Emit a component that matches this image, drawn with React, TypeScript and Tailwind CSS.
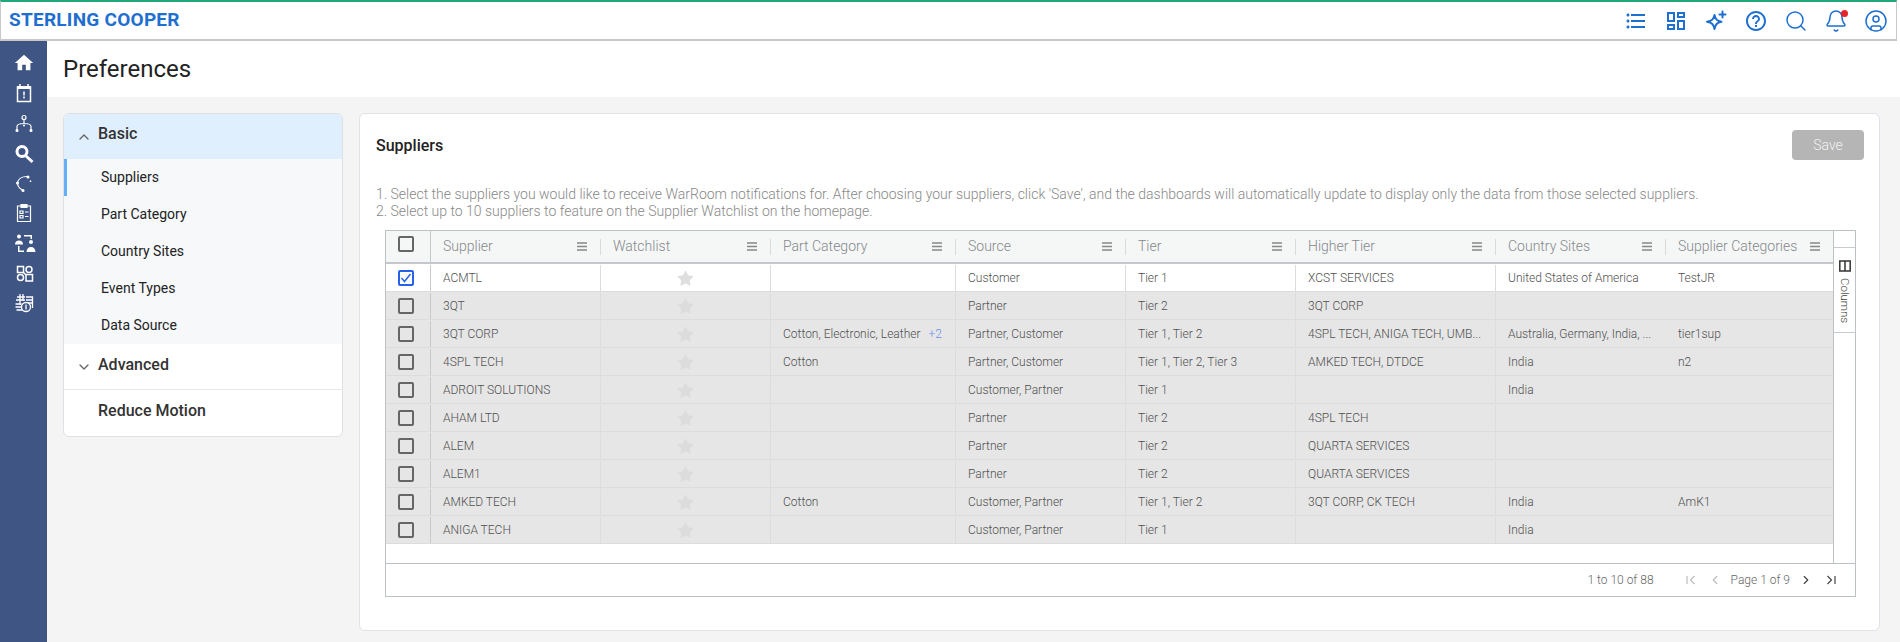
import { MdHome, MdFormatListBulleted, MdOutlineDashboard, MdOutlineHelpOutline } from 'react-icons/md';
import { ChevronUp, ChevronDown, ChevronLeft, ChevronRight, Search, Bell, CircleUser, Star } from 'lucide-react';

const cols = 'grid grid-cols-[45px_170px_170px_185px_170px_170px_200px_170px_168px]';

const rows = [
  ['ACMTL', '', 'Customer', 'Tier 1', 'XCST SERVICES', 'United States of America', 'TestJR'],
  ['3QT', '', 'Partner', 'Tier 2', '3QT CORP', '', ''],
  ['3QT CORP', 'Cotton, Electronic, Leather', 'Partner, Customer', 'Tier 1, Tier 2', '4SPL TECH, ANIGA TECH, UMB...', 'Australia, Germany, India, ...', 'tier1sup'],
  ['4SPL TECH', 'Cotton', 'Partner, Customer', 'Tier 1, Tier 2, Tier 3', 'AMKED TECH, DTDCE', 'India', 'n2'],
  ['ADROIT SOLUTIONS', '', 'Customer, Partner', 'Tier 1', '', 'India', ''],
  ['AHAM LTD', '', 'Partner', 'Tier 2', '4SPL TECH', '', ''],
  ['ALEM', '', 'Partner', 'Tier 2', 'QUARTA SERVICES', '', ''],
  ['ALEM1', '', 'Partner', 'Tier 2', 'QUARTA SERVICES', '', ''],
  ['AMKED TECH', 'Cotton', 'Customer, Partner', 'Tier 1, Tier 2', '3QT CORP, CK TECH', 'India', 'AmK1'],
  ['ANIGA TECH', '', 'Customer, Partner', 'Tier 1', '', 'India', ''],
];

const headers = ['Supplier', 'Watchlist', 'Part Category', 'Source', 'Tier', 'Higher Tier', 'Country Sites', 'Supplier Categories'];
const basicItems = ['Suppliers', 'Part Category', 'Country Sites', 'Event Types', 'Data Source'];

function Sparkle() {
  return (
    <svg width="24" height="24" viewBox="0 0 24 24" fill="none" stroke="#1f6fd0" strokeWidth="2" strokeLinejoin="round">
      <path d="M10.500 6c.9 4.300 2.400 5.800 7 6.800-4.600 1-6.100 2.500-7 7.200-.9-4.700-2.400-6.200-7.500-7.200 5.100-1 6.600-2.500 7.500-6.800z" />
      <path d="M18.500 2.500v6M15.500 5.500h6" strokeLinecap="round" />
    </svg>
  );
}

function HeaderMenu() {
  return (
    <svg width="10" height="9" viewBox="0 0 10 9" className="shrink-0" fill="none" stroke="#888888" strokeWidth="1.500">
      <path d="M0 1h10M0 4.500h10M0 8h10" />
    </svg>
  );
}

function SideIcons() {
  return (
    <>
      <div className="h-[30px] flex items-center justify-center"><MdHome size={22} /></div>
      <div className="h-[30px] flex items-center justify-center">
        <svg width="24" height="24" viewBox="0 0 24 24" fill="none" stroke="white" strokeWidth="1.500">
          <path d="M5.500 6h13v14.500h-13z" />
          <path d="M5 6.500h14" strokeWidth="3" />
          <path d="M8 3v3M16 3v3M12 10.500v4M12 15.500v2" />
        </svg>
      </div>
      <div className="h-[30px] flex items-center justify-center">
        <svg width="24" height="24" viewBox="0 0 24 24" fill="none" stroke="white" strokeWidth="1.200">
          <circle cx="12" cy="6.500" r="2" />
          <path d="M12 8.500v4M5 19v-3.500c0-2 3-3 7-3s7 1 7 3V19" />
          <circle cx="5" cy="19.500" r="1.500" fill="white" stroke="none" />
          <circle cx="19" cy="19.500" r="1.500" fill="white" stroke="none" />
          <circle cx="12" cy="14.500" r="1" fill="white" stroke="none" />
        </svg>
      </div>
      <div className="h-[30px] flex items-center justify-center">
        <svg width="24" height="24" viewBox="0 0 24 24" fill="none" stroke="white" strokeWidth="3">
          <circle cx="10" cy="10.500" r="5" />
          <path d="M14 15l6.500 6" />
        </svg>
      </div>
      <div className="h-[30px] flex items-center justify-center">
        <svg width="24" height="24" viewBox="0 0 24 24" fill="none" stroke="white" strokeWidth="1.200">
          <path d="M15 5.500c-5 0-9 2.500-9.500 6.500 0 3 2 5.500 5 7" />
          <path d="M18.500 9.500v1.500" strokeWidth="1.500" />
          <circle cx="16" cy="6" r="1.500" fill="white" stroke="none" />
          <circle cx="5.500" cy="12" r="1.500" fill="white" stroke="none" />
          <circle cx="11" cy="19.500" r="1.500" fill="white" stroke="none" />
        </svg>
      </div>
      <div className="h-[30px] flex items-center justify-center">
        <svg width="24" height="24" viewBox="0 0 24 24" fill="none" stroke="white" strokeWidth="1.200">
          <path d="M5.500 5h13v15.500h-13z" />
          <path d="M9 3.500h6v3H9z" fill="white" />
          <path d="M8 10h3v2.500H8zM8 14.500h3V17H8zM13 11h3.500M13 15.500h3.500" />
        </svg>
      </div>
      <div className="h-[30px] flex items-center justify-center">
        <svg width="24" height="24" viewBox="0 0 24 24" fill="white" stroke="none">
          <circle cx="7" cy="5.500" r="2" />
          <path d="M3 13.500c0-2.600 1.600-4 4-4s4 1.400 4 4z" />
          <circle cx="19" cy="11" r="2" />
          <path d="M14.500 21c0-3 1.800-5 4.500-5s4.500 2 4.500 5z" />
          <path d="M12 4h8v4h-1.500V5.500H12zM6 15h1.500v4.500H12V21H6z" />
        </svg>
      </div>
      <div className="h-[30px] flex items-center justify-center">
        <svg width="24" height="24" viewBox="0 0 24 24" fill="none" stroke="white" strokeWidth="1.500">
          <path d="M5.500 5.500h6v6h-6zM14 13.500h6.500v6.500H14z" />
          <circle cx="17" cy="8.500" r="3" />
          <circle cx="8.500" cy="16.500" r="3" />
          <path d="M11 11l3 3" />
        </svg>
      </div>
      <div className="h-[30px] flex items-center justify-center">
        <svg width="24" height="24" viewBox="0 0 24 24" fill="none" stroke="white" strokeWidth="1.300">
          <path d="M8 3v11M11 3v7M5 6h8M4 9h9M3.500 13h6M3.500 16h6M4.500 19h6" />
          <path d="M14 6h6.500v11M14 9h6.500M14 12h6.500" />
          <circle cx="14" cy="16" r="4.500" fill="#3f5685" />
          <path d="M14 13.500v5" />
        </svg>
      </div>
    </>
  );
}

function Checkbox({ checked }: { checked?: boolean }) {
  return (
    <div className={`w-4 h-4 rounded-[2px] border-2 flex items-center justify-center ${checked ? 'border-[#2661ea] bg-white' : 'border-[#666666]'}`}>
      {checked && (
        <svg width="12" height="12" viewBox="0 0 12 12" fill="none" stroke="#2661ea" strokeWidth="1.500">
          <path d="M1.500 6l3 3.500L10.500 2" />
        </svg>
      )}
    </div>
  );
}

export default function App() {
  return (
    <div className="w-[1900px] h-[642px] overflow-hidden flex flex-col bg-white font-['Roboto',sans-serif]">
      <header className="h-[41px] shrink-0 border-t-2 border-t-[#23a67c] border-b-2 border-b-[#c8c8c8] border-l border-l-[#c8c8c8] border-r border-r-[#c8c8c8] mr-[3px] flex items-center justify-between pl-2 pr-[8px]">
        <span className="text-[19px] font-bold tracking-[0.25px] text-[#1f6fd0]">STERLING COOPER</span>
        <div className="flex items-center gap-[16px] text-[#1f6fd0]">
          <MdFormatListBulleted size={24} />
          <MdOutlineDashboard size={24} />
          <Sparkle />
          <MdOutlineHelpOutline size={24} />
          <Search size={24} strokeWidth={1.500} />
          <div className="relative">
            <Bell size={24} strokeWidth={1.500} />
            <span className="absolute top-[1px] right-0 w-[7px] h-[7px] rounded-full bg-[#e8232a]" />
          </div>
          <CircleUser size={24} strokeWidth={1.500} />
        </div>
      </header>

      <div className="flex flex-1 min-h-0">
        <nav className="w-[47px] shrink-0 bg-[#3f5685] flex flex-col pt-[7px] text-white">
          <SideIcons />
        </nav>

        <main className="flex-1 min-w-0 flex flex-col">
          <div className="h-[56px] shrink-0 bg-white flex items-center pl-4">
            <h1 className="text-[24px] text-[#222222] leading-none">Preferences</h1>
          </div>

          <div className="flex-1 bg-[#f4f4f4] flex items-start gap-4 pt-4 pl-4 pr-5">
            <aside className="w-[280px] shrink-0 rounded-md border border-[#dde1e6] bg-white overflow-hidden">
              <div className="h-[45px] bg-[#e0effd] flex items-center gap-[6px] pl-[12px] text-[#333333]">
                <ChevronUp size={16} strokeWidth={2} className="text-[#666666]" />
                <span className="text-[16px] font-medium mb-[5px]">Basic</span>
              </div>
              <div className="bg-[#f6f8fa]">
                {basicItems.map((item, i) => (
                  <div key={item} className={`h-[37px] flex items-center text-[14px] text-[#222222] ${i === 0 ? 'border-l-[3px] border-l-[#62b0fb] pl-[34px]' : 'pl-[37px]'}`}>
                    {item}
                  </div>
                ))}
              </div>
              <div className="h-[46px] flex items-center gap-[6px] pl-[12px] border-b border-[#e5e7ea] text-[#333333]">
                <ChevronDown size={16} strokeWidth={2} className="text-[#666666]" />
                <span className="text-[16px] font-medium mb-[4px]">Advanced</span>
              </div>
              <div className="h-[46px] flex items-center pl-[34px] pb-[4px] text-[16px] font-medium text-[#333333]">Reduce Motion</div>
            </aside>

            <section className="flex-1 min-w-0 h-[518px] rounded-md border border-[#e0e3e8] bg-white pl-[16px] pr-[15px] pt-4">
              <div className="flex items-center justify-between h-[30px]">
                <h2 className="text-[16px] font-medium text-[#222222] mt-[2px]">Suppliers</h2>
                <button className="w-[72px] h-[30px] rounded bg-[#b5b5b5] text-[14px] font-light text-[#f2f2f2]">Save</button>
              </div>
              <div className="mt-[26px] text-[14px] font-light leading-[17px] text-[#888888]">
                <p>1. Select the suppliers you would like to receive WarRoom notifications for. After choosing your suppliers, click 'Save', and the dashboards will automatically update to display only the data from those selected suppliers.</p>
                <p>2. Select up to 10 suppliers to feature on the Supplier Watchlist on the homepage.</p>
              </div>

              <div className="ml-[9px] mt-[10px] w-[1471px] h-[367px] border border-[#bcc1c4] flex flex-col">
                <div className="flex flex-1 min-h-0">
                  <div className="w-[1448px] border-r border-[#bcc1c4] flex flex-col overflow-hidden">
                    <div className={`${cols} h-[33px] shrink-0 bg-[#f5f7f7] border-b-2 border-[#c4c8ca] text-[#85888b] text-[14px] font-light`}>
                      <div className="flex items-center justify-center pr-[4px] pb-[5px] border-r border-[#c4c8ca]"><Checkbox /></div>
                      {headers.map((h, i) => (
                        <div key={h} className="flex items-center justify-between pl-[12px] pr-[14px] relative whitespace-nowrap">
                          <span>{h}</span>
                          <HeaderMenu />
                          {i < 7 && <span className="absolute right-0 top-[8px] h-[16px] w-px bg-[#d8dadc]" />}
                        </div>
                      ))}
                    </div>
                    {rows.map((r, idx) => (
                      <div key={r[0]} className={`${cols} h-[28px] shrink-0 pt-[1px] border-b border-[#dcdcdc] text-[12px] font-light text-[#505050] ${idx === 0 ? 'bg-white' : 'bg-[#e6e6e6]'}`}>
                        <div className="flex items-center justify-center pr-[4px] border-r border-[#c9c9c9]"><Checkbox checked={idx === 0} /></div>
                        <div className="flex items-center pl-[12px] border-r border-[#dcdcdc]">{r[0]}</div>
                        <div className="flex items-center justify-center border-r border-[#dcdcdc]">
                          <Star size={19} fill={idx === 0 ? '#dfdfdf' : '#dcdcdc'} stroke="none" />
                        </div>
                        <div className="flex items-center pl-[12px] border-r border-[#dcdcdc] whitespace-nowrap">
                          <span>{r[1]}</span>
                          {idx === 2 && <span className="ml-2 text-[#6f8fe8]">+2</span>}
                        </div>
                        {r.slice(2).map((v, c) => (
                          <div key={c} className={`flex items-center pl-[12px] whitespace-nowrap overflow-hidden ${c < 3 ? 'border-r border-[#dcdcdc]' : ''}`}>{v}</div>
                        ))}
                      </div>
                    ))}
                  </div>
                  <div className="flex-1 pt-[16px]">
                    <div className="h-[86px] border-y border-[#c8cccf] flex flex-col items-center pt-[12px] gap-[6px]">
                      <svg width="12" height="12" viewBox="0 0 12 12" fill="none" stroke="#333333" strokeWidth="1.500"><path d="M.800 1h10.400v10H.800zM6 1v10" /></svg>
                      <span className="text-[11.500px] font-light text-[#444444] leading-none [writing-mode:vertical-rl]">Columns</span>
                    </div>
                  </div>
                </div>
                <div className="h-[33px] shrink-0 border-t border-[#bcc1c4] flex items-center justify-end pr-[19px] text-[12px] font-light text-[#666666]">
                  <span>1 to 10 of 88</span>
                  <svg width="10" height="10" viewBox="0 0 10 10" className="ml-[32px]" fill="none" stroke="#bdbdbd" strokeWidth="1.200"><path d="M1 1v8M8.500 1l-4 4 4 4" /></svg>
                  <ChevronLeft size={14} className="ml-[12px] text-[#bdbdbd]" />
                  <span className="ml-[9px]">Page 1 of 9</span>
                  <ChevronRight size={14} className="ml-[9px] text-[#444444]" />
                  <svg width="10" height="10" viewBox="0 0 10 10" className="ml-[13px]" fill="none" stroke="#444444" strokeWidth="1.200"><path d="M1.500 1l4 4-4 4M9 1v8" /></svg>
                </div>
              </div>
            </section>
          </div>
        </main>
      </div>
    </div>
  );
}
